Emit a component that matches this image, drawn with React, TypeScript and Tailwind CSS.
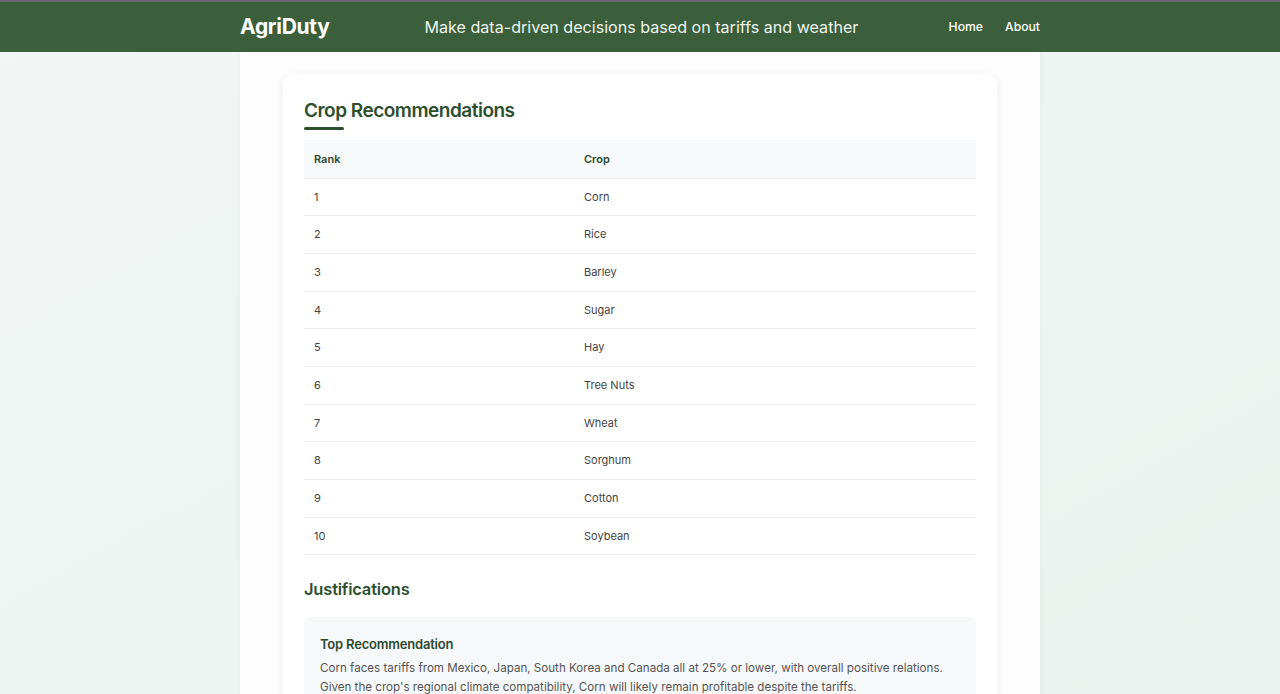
import React from "react";

const crops = ["Corn", "Rice", "Barley", "Sugar", "Hay", "Tree Nuts", "Wheat", "Sorghum", "Cotton", "Soybean"];

export default function App() {
  return (
    <div className="min-h-[694px] bg-gradient-to-br from-[#f2f6f5] to-[#e9f2ee] font-['Inter',sans-serif] border-t-2 border-[#6b6470]">
      <header className="bg-[#3a5f3a] h-[50px]">
        <div className="w-[800px] mx-auto h-full flex items-center">
          <div className="text-white font-bold text-[21px] tracking-[-0.3px]">AgriDuty</div>
          <div className="ml-[95px] text-[#eef3ee] text-[16.1px]">Make data-driven decisions based on tariffs and weather</div>
          <nav className="ml-auto flex gap-[22px] text-white text-[12.2px] font-medium">
            <span>Home</span>
            <span>About</span>
          </nav>
        </div>
      </header>
      <main className="w-[800px] mx-auto bg-[#fdfdfd] shadow-[0_0_6px_rgba(0,0,0,0.04)] min-h-[642px] pt-[22px] px-[43px]">
        <div className="bg-white rounded-[12px] shadow-[0_2px_10px_rgba(0,0,0,0.08)] px-[21px] pt-[25px] pb-[20px]">
          <h2 className="text-[19px] font-semibold text-[#2e4f2e] tracking-[-0.5px] leading-[24px]">Crop Recommendations</h2>
          <div className="w-[40px] h-[3px] bg-[#2e4f2e] rounded-full mt-[4px] mb-[10px]"></div>
          <table className="w-full border-collapse text-left">
            <thead>
              <tr className="bg-[#f7f8f9] border-b border-[#ececec] h-[38px]">
                <th className="w-[280px] pl-[10px] text-[11px] font-semibold text-[#2e4a2e]">Rank</th>
                <th className="text-[11px] font-semibold text-[#2e4a2e]">Crop</th>
              </tr>
            </thead>
            <tbody>
              {crops.map((c, i) => (
                <tr key={c} className="border-b border-[#ededed] h-[37.7px] text-[11px] text-[#444]">
                  <td className="pl-[10px]">{i + 1}</td>
                  <td>{c}</td>
                </tr>
              ))}
            </tbody>
          </table>
          <h3 className="mt-[24px] text-[16.5px] font-semibold text-[#2e4f2e] leading-[20px] tracking-[-0.2px]">Justifications</h3>
          <div className="mt-[18px] bg-[#f7f8f9] rounded-[8px] px-[16px] pt-[18px] pb-[16px]">
            <h4 className="text-[13px] font-semibold text-[#2e4a2e] leading-[18px] tracking-[-0.2px]">Top Recommendation</h4>
            <p className="mt-[6px] text-[11.6px] text-[#555] leading-[19px]">
              Corn faces tariffs from Mexico, Japan, South Korea and Canada all at 25% or lower, with overall positive relations.
              <br />
              Given the crop's regional climate compatibility, Corn will likely remain profitable despite the tariffs.
            </p>
          </div>
        </div>
      </main>
    </div>
  );
}
